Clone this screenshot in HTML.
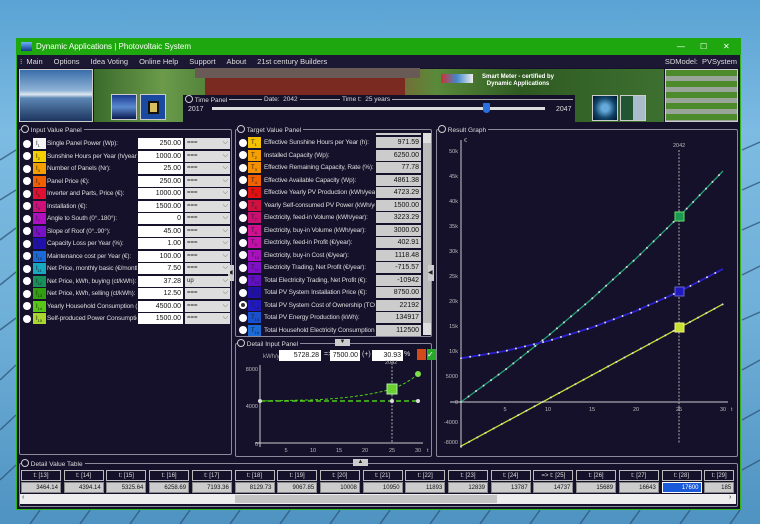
<!DOCTYPE html>
<html><head><meta charset="utf-8"><style>
*{margin:0;padding:0;box-sizing:border-box}
body{width:760px;height:524px;overflow:hidden;position:relative;font-family:"Liberation Sans",sans-serif;font-size:7.5px;color:#ddd;
background:linear-gradient(180deg,#5aa3d4 0%,#7cbbe2 25%,#6fb0d8 60%,#4f93c2 100%)}
.a{position:absolute}
.win{left:16px;top:38px;width:725px;height:472px;background:#15112b;border:1px solid #2db51a}
.tb{left:16px;top:38px;width:725px;height:17px;background:#1fa70f;color:#fff;font-size:8px;line-height:17px}
.menu{left:17px;top:55px;width:723px;height:13px;background:#1c1833;color:#ddd;font-size:7.5px;line-height:13px}
.menu span{margin-right:11px}
.pnl{border:1px solid #8a8a9a;border-radius:2px}
.pt{font-size:6.5px;line-height:9px;height:9px;color:#ddd;background:#15112b;padding:0 2px 0 0;white-space:nowrap}
.ic{width:8px;height:8px;border-radius:50%;border:1px solid #ccc;display:inline-block;background:#15112b;vertical-align:-1px}
.rad{width:8px;height:8px;border-radius:50%;background:#fff}
.sq{width:13px;height:11px;font-size:6px;color:#222;line-height:12px;padding-left:3px}
.lbl{font-size:6.5px;letter-spacing:-0.15px;color:#ddd;white-space:nowrap;overflow:hidden;line-height:10px}
.box{background:#fff;color:#111;text-align:right;font-size:7px;line-height:11px;height:11px;padding-right:2px}
.gbox{background:#ccc;color:#111;text-align:right;font-size:7px;line-height:11px;height:11px;padding-right:2px}
.sel{background:#ddd;color:#222;font-size:6px;line-height:11px;height:11px;padding-left:2px}
.sel:after{content:"⌵";position:absolute;right:2px;top:-1px;font-size:7px;color:#555}
.th{border:1px solid #bbb;color:#ddd;text-align:center;font-size:6px;line-height:10px;height:11px;white-space:nowrap}
.td{background:#ccc;color:#111;text-align:right;font-size:6px;line-height:10px;height:11px;padding-right:2px;border:1px solid #888;white-space:nowrap;overflow:hidden}
</style></head><body>
<svg class="a" style="left:0;top:0" width="760" height="524">
<g stroke="#2a4d70" stroke-width="1.5" opacity=".7">
<line x1="0" y1="160" x2="16" y2="150"/><line x1="0" y1="200" x2="16" y2="190"/><line x1="0" y1="240" x2="16" y2="228"/><line x1="0" y1="285" x2="16" y2="272"/><line x1="0" y1="330" x2="16" y2="318"/><line x1="0" y1="380" x2="16" y2="365"/><line x1="0" y1="430" x2="16" y2="415"/><line x1="0" y1="480" x2="16" y2="465"/>
<line x1="742" y1="150" x2="760" y2="142"/><line x1="742" y1="190" x2="760" y2="182"/><line x1="742" y1="230" x2="760" y2="222"/><line x1="742" y1="275" x2="760" y2="266"/><line x1="742" y1="320" x2="760" y2="312"/><line x1="742" y1="370" x2="760" y2="360"/><line x1="742" y1="420" x2="760" y2="410"/><line x1="742" y1="470" x2="760" y2="460"/>
<line x1="30" y1="524" x2="40" y2="510"/><line x1="80" y1="524" x2="90" y2="510"/><line x1="130" y1="524" x2="140" y2="510"/><line x1="180" y1="524" x2="190" y2="510"/><line x1="230" y1="524" x2="240" y2="510"/><line x1="280" y1="524" x2="290" y2="510"/><line x1="330" y1="524" x2="340" y2="510"/><line x1="380" y1="524" x2="390" y2="510"/><line x1="430" y1="524" x2="440" y2="510"/><line x1="480" y1="524" x2="490" y2="510"/><line x1="530" y1="524" x2="540" y2="510"/><line x1="580" y1="524" x2="590" y2="510"/><line x1="630" y1="524" x2="640" y2="510"/><line x1="680" y1="524" x2="690" y2="510"/><line x1="730" y1="524" x2="740" y2="510"/>
</g></svg>
<div class="a win"></div>
<div class="a tb"><span class="a" style="left:5px;top:4px;width:11px;height:9px;background:linear-gradient(#6ab0ff,#123a8a)"></span><span style="margin-left:20px">Dynamic Applications | Photovoltaic System</span>
<span class="a" style="left:661px;top:0">—</span><span class="a" style="left:684px;top:0">☐</span><span class="a" style="left:707px;top:0">✕</span></div>
<div class="a menu"><span style="margin-left:3px;margin-right:4px">⁝</span><span>Main</span><span>Options</span><span>Idea Voting</span><span>Online Help</span><span>Support</span><span>About</span><span>21st century Builders</span>
<span class="a" style="right:3px;top:0;margin:0">SDModel:&nbsp; PVSystem</span></div>
<div class="a" style="left:19px;top:69px;width:74px;height:53px;border:1px solid #ccc;background:linear-gradient(180deg,#3a6eaa 0%,#8fb3d6 40%,#dfe8f0 48%,#5c86b4 55%,#1d3560 100%)"></div>
<div class="a" style="left:94px;top:69px;width:570px;height:53px;background:linear-gradient(90deg,#3b6b2c 0%,#6a9a4a 12%,#4e7d36 22%,#8a3a2a 30%,#9a4030 45%,#5a8a3a 60%,#2e5a22 75%,#3d7030 100%)"></div>
<div class="a" style="left:205px;top:75px;width:200px;height:20px;background:#7b2a22"></div>
<div class="a" style="left:195px;top:68px;width:225px;height:10px;background:#6a5a55"></div>
<div class="a" style="left:441px;top:74px;width:32px;height:9px;background:linear-gradient(90deg,#c33,#48c,#eee)"></div>
<div class="a" style="left:482px;top:74px;color:#fff;font-size:6px;font-weight:bold;line-height:7px;text-align:center">Smart Meter - certified by<br>Dynamic Applications</div>
<div class="a" style="left:111px;top:94px;width:26px;height:26px;border:1px solid #ccc;background:linear-gradient(#1a3a90,#5a8ad0 50%,#0a1a50)"></div>
<div class="a" style="left:140px;top:94px;width:26px;height:26px;border:1px solid #ccc;background:#1a4aa0"><div class="a" style="left:7px;top:6px;width:11px;height:13px;background:#d8c060;border:2px solid #111"></div></div>
<div class="a" style="left:592px;top:95px;width:26px;height:26px;border:1px solid #ccc;background:radial-gradient(circle,#6ad 20%,#146 60%,#013)"></div>
<div class="a" style="left:620px;top:95px;width:26px;height:26px;border:1px solid #ccc;background:linear-gradient(90deg,#253 50%,#abc 50%)"></div>
<div class="a" style="left:665px;top:69px;width:73px;height:53px;border:1px solid #ccc;background:repeating-linear-gradient(180deg,#4c8a2c 0 6px,#9aa59a 6px 11px)"></div>
<div class="a" style="left:183px;top:95px;width:392px;height:27px;background:#15112b"></div>
<div class="a" style="left:190px;top:99px;width:383px;height:0;border-top:1px solid #aaa"></div>
<div class="a pt" style="left:185px;top:95px"><span class="ic"></span> Time Panel</div>
<div class="a pt" style="left:262px;top:95px;padding:0 2px">Date:&nbsp; 2042</div>
<div class="a pt" style="left:340px;top:95px;padding:0 2px">Time t:&nbsp; 25 years</div>
<div class="a" style="left:188px;top:106px;font-size:7px">2017</div>
<div class="a" style="left:556px;top:106px;font-size:7px">2047</div>
<div class="a" style="left:212px;top:107px;width:333px;height:3px;background:#ddd"></div>
<div class="a" style="left:483px;top:103px;width:7px;height:10px;background:#2a6ee0;border-radius:1px 1px 4px 4px"></div>
<div class="a pnl" style="left:19px;top:129px;width:213px;height:326px"></div>
<div class="a pt" style="left:21px;top:125px"><span class="ic"></span> Input Value Panel</div>
<div class="a" style="left:228px;top:265px;width:6px;height:16px;background:#ccc;color:#222;font-size:6px;line-height:16px">◀</div>
<div class="a pnl" style="left:235px;top:129px;width:197px;height:208px"></div>
<div class="a pt" style="left:237px;top:125px"><span class="ic"></span> Target Value Panel</div>
<div class="a" style="left:423px;top:133px;width:8px;height:202px;background:#ddd"></div>
<div class="a" style="left:423px;top:143px;width:8px;height:180px;background:#bbb"></div>
<div class="a" style="left:376px;top:133px;width:45px;height:2px;background:#ccc"></div>
<div class="a" style="left:428px;top:265px;width:6px;height:16px;background:#ccc;color:#222;font-size:6px;line-height:16px">◀</div>
<div class="a pnl" style="left:235px;top:343px;width:197px;height:114px"></div>
<div class="a pt" style="left:237px;top:339px"><span class="ic"></span> Detail Input Panel</div>
<div class="a" style="left:335px;top:339px;width:15px;height:7px;background:#ccc;color:#222;font-size:6px;line-height:7px;text-align:center">▼</div>
<div class="a" style="left:263px;top:354px;font-size:6px;color:#aaa">kWh/y</div>
<div class="a box" style="left:279px;top:350px;width:42px">5728.28</div>
<div class="a" style="left:324px;top:351px;font-size:7px">=&gt;</div>
<div class="a box" style="left:330px;top:350px;width:30px">7500.00</div>
<div class="a" style="left:362px;top:351px;font-size:7px">(+)</div>
<div class="a box" style="left:372px;top:350px;width:31px">30.93</div>
<div class="a" style="left:404px;top:351px;font-size:7px">%</div>
<div class="a" style="left:417px;top:349px;width:9px;height:11px;background:#d24a1a"></div>
<div class="a" style="left:427px;top:349px;width:9px;height:11px;background:#2aa82a;color:#fff;font-size:8px;line-height:11px">✓</div>
<div class="a pnl" style="left:436px;top:129px;width:302px;height:328px"></div>
<div class="a pt" style="left:438px;top:125px"><span class="ic"></span> Result Graph</div>
<div class="a pnl" style="left:19px;top:463px;width:719px;height:44px"></div>
<div class="a pt" style="left:21px;top:459px"><span class="ic"></span> Detail Value Table</div>
<div class="a" style="left:353px;top:459px;width:15px;height:7px;background:#ccc;color:#222;font-size:6px;line-height:7px;text-align:center">▲</div>
<div class="a" style="left:20px;top:494px;width:716px;height:10px;background:#eee"></div>
<div class="a" style="left:235px;top:495px;width:262px;height:8px;background:#c4c4c4"></div>
<div class="a" style="left:22px;top:494px;color:#333;font-size:7px">‹</div>
<div class="a" style="left:729px;top:494px;color:#333;font-size:7px">›</div>
<div id="rows"></div>

<svg class="a" style="left:0;top:0" width="760" height="524" font-family="Liberation Sans" font-size="5.5" fill="#bbb">
<g stroke="#ccc" stroke-width="1">
<line x1="461" y1="140" x2="461" y2="448"/><line x1="450" y1="402" x2="728" y2="402"/>
</g>
<line x1="679" y1="150" x2="679" y2="443" stroke="#aaa" stroke-dasharray="2,1.5"/>
<text x="673" y="147">2042</text>
<g text-anchor="end"><text x="458" y="153">50k</text><text x="458" y="178">45k</text><text x="458" y="203">40k</text><text x="458" y="228">35k</text><text x="458" y="253">30k</text><text x="458" y="278">25k</text><text x="458" y="303">20k</text><text x="458" y="328">15k</text><text x="458" y="353">10k</text><text x="458" y="378">5000</text><text x="458" y="404">0</text><text x="458" y="424">-4000</text><text x="458" y="444">-8000</text></g>
<g text-anchor="middle"><text x="505" y="411">5</text><text x="548" y="411">10</text><text x="592" y="411">15</text><text x="636" y="411">20</text><text x="679" y="411">25</text><text x="723" y="411">30</text></g>
<text x="731" y="411">t</text><text x="464" y="142">€</text>
<polyline fill="none" stroke="#1fa070" stroke-width="1.3" points="461,402 504.7,370.2 548.3,335.7 592,298.6 635.6,258.9 679.3,216.3 723,171"/>
<polyline fill="none" stroke="#2a20d0" stroke-width="1.8" points="461,358.3 504.7,351.1 548.3,340.9 592,327.5 635.6,311.1 679.3,291.6 723,269"/>
<line x1="461" y1="446.2" x2="723" y2="304.1" stroke="#c8e030" stroke-width="1.3"/>
<g stroke="#ddd" stroke-width="2" stroke-linecap="round" stroke-dasharray="0 9.3" fill="none">
<polyline points="461,402 504.7,370.2 548.3,335.7 592,298.6 635.6,258.9 679.3,216.3 723,171"/>
<polyline points="461,358.3 504.7,351.1 548.3,340.9 592,327.5 635.6,311.1 679.3,291.6 723,269"/>
<line x1="461" y1="446.2" x2="723" y2="304.1"/>
</g>
<rect x="675" y="212" width="9" height="9" fill="#1a9a50" stroke="#6d6"/>
<rect x="675" y="287" width="9" height="9" fill="#2018c0" stroke="#66c"/>
<rect x="675" y="323" width="9" height="9" fill="#c8e030" stroke="#ee8"/>
<g stroke="#ccc"><line x1="260" y1="365" x2="260" y2="447"/><line x1="255" y1="443" x2="423" y2="443"/></g>
<line x1="392" y1="363" x2="392" y2="443" stroke="#aaa" stroke-dasharray="2,1.5"/>
<text x="385" y="364">2042</text>
<g text-anchor="end"><text x="258" y="371">8000</text><text x="258" y="408">4000</text><text x="258" y="446">0</text></g>
<g text-anchor="middle"><text x="286" y="452">5</text><text x="313" y="452">10</text><text x="339" y="452">15</text><text x="365" y="452">20</text><text x="392" y="452">25</text><text x="418" y="452">30</text></g>
<text x="427" y="452">t</text>
<line x1="260" y1="401" x2="418" y2="401" stroke="#4ecb1a" stroke-width="1.5" stroke-dasharray="5,3"/>
<path d="M260 401 L310 400 Q360 398 392 389 Q408 383 418 374" fill="none" stroke="#4ecb1a" stroke-width="1" stroke-dasharray="3,2"/>
<circle cx="418" cy="374" r="3" fill="#7ee04a"/><circle cx="392" cy="401" r="2" fill="#ddd"/><circle cx="260" cy="401" r="2" fill="#ddd"/><circle cx="418" cy="401" r="2" fill="#ddd"/>
<rect x="387" y="384" width="10" height="10" fill="#6ad030" stroke="#aea"/>
</svg>
<script>
var inp=[["Single Panel Power (Wp):","250.00","#f4f4f4"],["Sunshine Hours per Year (h/year):","1000.00","#f5d000"],["Number of Panels (Nr):","25.00","#f5a000"],["Panel Price (€):","250.00","#f06000"],["Inverter and Parts, Price (€):","1000.00","#e01030"],["Installation (€):","1500.00","#d0107a"],["Angle to South (0°..180°):","0","#b010c0"],["Slope of Roof (0°..90°):","45.00","#7a10c8"],["Capacity Loss per Year (%):","1.00","#2010b0"],["Maintenance cost per Year (€):","100.00","#1a6ad8"],["Net Price, monthly basic (€/month):","7.50","#18a8c0"],["Net Price, kWh, buying (ct/kWh):","37.28","#18905a"],["Net Price, kWh, selling (ct/kWh):","12.50","#30a010"],["Yearly Household Consumption (kWh","4500.00","#58c818"],["Self-produced Power Consumption (","1500.00","#a8d830"]];
var tg=[["Effective Sunshine Hours per Year (h):","971.59","#f5c000"],["Installed Capacity (Wp):","6250.00","#f5a000"],["Effective Remaining Capacity, Rate (%):","77.78","#f59000"],["Effective Available Capacity (Wp):","4861.38","#f06000"],["Effective Yearly PV Production (kWh/year):","4723.29","#e01010"],["Yearly Self-consumed PV Power (kWh/year","1500.00","#d01040"],["Electricity, feed-in Volume (kWh/year):","3223.29","#c81070"],["Electricity, buy-in Volume (kWh/year):","3000.00","#d01090"],["Electricity, feed-in Profit (€/year):","402.91","#c010a8"],["Electricity, buy-in Cost (€/year):","1118.48","#a810c0"],["Electricity Trading, Net Profit (€/year):","-715.57","#8010c8"],["Total Electricity Trading, Net Profit (€):","-10942","#6010c0"],["Total PV System Installation Price (€):","8750.00","#2010a8"],["Total PV System Cost of Ownership (TCO) (","22192","#2018c0"],["Total PV Energy Production (kWh):","134917","#1850d0"],["Total Household Electricity Consumption (kV","112500","#1a6ad8"]];
var h="";
inp.forEach(function(r,i){var y=138+i*12.5;
h+='<div class="a rad" style="left:23px;top:'+(y+1.5)+'px"></div><div class="a sq" style="left:33px;top:'+y+'px;background:'+r[2]+'">I<sub style="font-size:4px">'+(i+1)+'</sub></div><div class="a lbl" style="left:47px;top:'+(y+1)+'px;width:90px">'+r[0]+'</div><div class="a box" style="left:138px;top:'+y+'px;width:45px">'+r[1]+'</div><div class="a sel" style="left:185px;top:'+y+'px;width:45px">'+(i==11?'up':'===')+'</div>';});
tg.forEach(function(r,i){var y=137+i*12.5;
h+='<div class="a rad" style="left:239px;top:'+(y+1.5)+'px;'+(i==13?'box-shadow:inset 0 0 0 2px #fff,inset 0 0 0 4px #333':'')+'"></div><div class="a sq" style="left:248px;top:'+y+'px;background:'+r[2]+'">T<sub style="font-size:4px">'+(i+1)+'</sub></div><div class="a lbl" style="left:264px;top:'+(y+1)+'px;width:111px">'+r[0]+'</div><div class="a gbox" style="left:376px;top:'+y+'px;width:45px">'+r[1]+'</div>';});
var vals=["3464.14","4394.14","5325.64","6258.69","7193.36","8129.73","9067.85","10008","10950","11893","12839","13787","14737","15689","16643","17600","185"];
vals.forEach(function(v,i){var x=21+i*42.7;var w=(i==16?30:40);var lab=(i==12?'=&gt; t: [25]':'t: ['+(13+i)+']');
h+='<div class="a th" style="left:'+x+'px;top:470px;width:'+w+'px">'+lab+'</div><div class="a td" style="left:'+x+'px;top:482px;width:'+w+'px;'+(i==15?'background:#1a5ad8;color:#fff;border-color:#fff':'')+'">'+v+'</div>';});
document.getElementById('rows').innerHTML=h;
</script>
</body></html>
